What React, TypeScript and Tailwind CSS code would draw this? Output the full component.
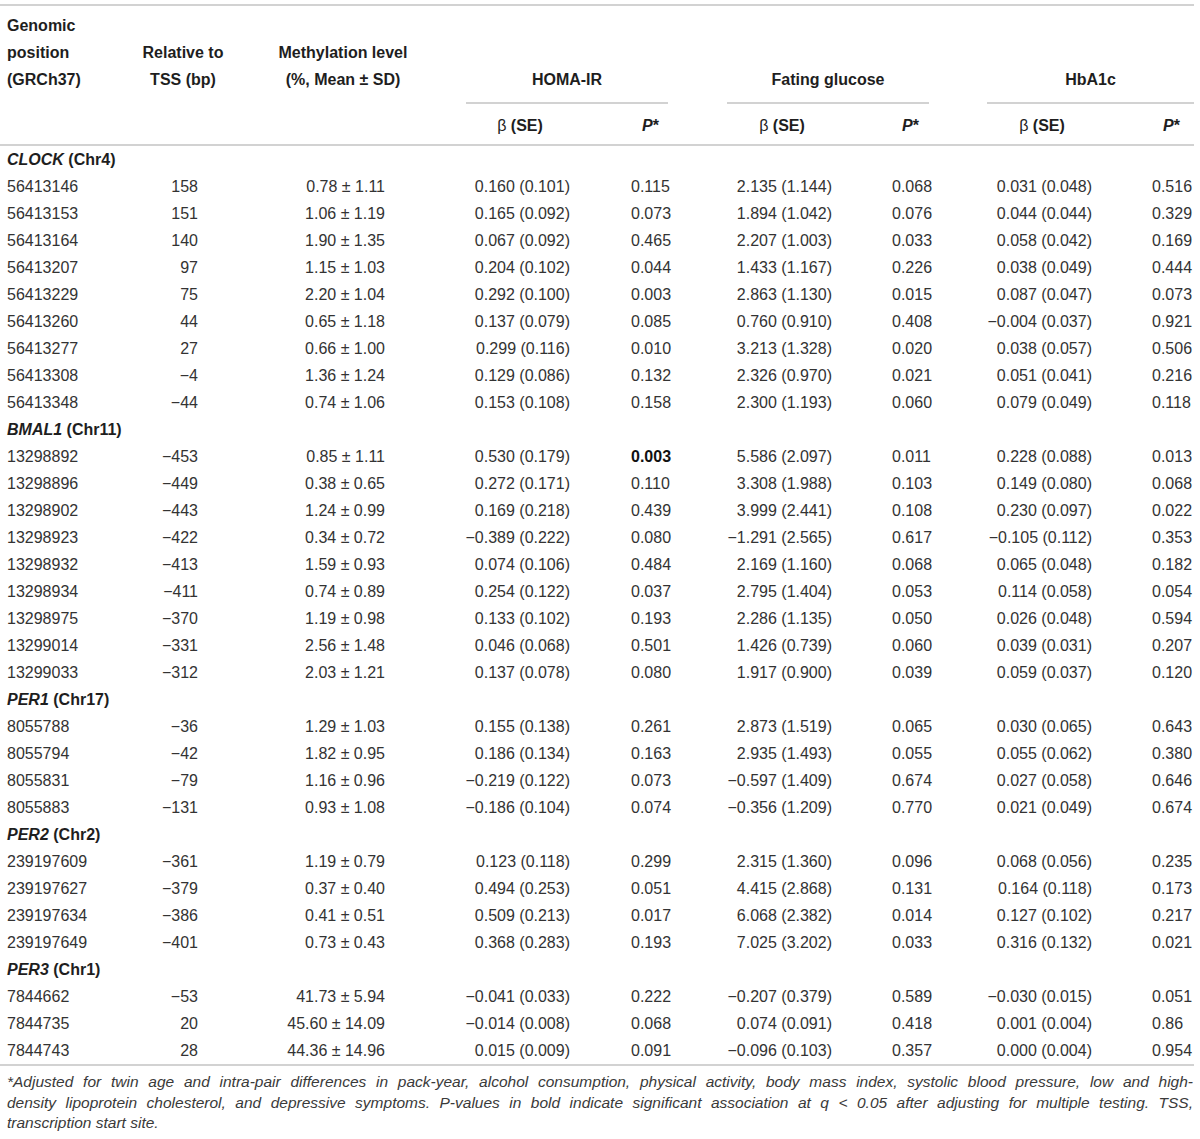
type Row = string[];

// columns: position | TSS | methylation | HOMA β | P | glucose β | P | HbA1c β | P
const grid =
  "grid grid-cols-[130px_106px_214px_140px_122px_140px_120px_140px_82px]";

const body: { gene: string; chr: string; rows: Row[] }[] = [
  {
    gene: "CLOCK",
    chr: "(Chr4)",
    rows: [
      ["56413146", "158", "0.78 ± 1.11", "0.160 (0.101)", "0.115", "2.135 (1.144)", "0.068", "0.031 (0.048)", "0.516"],
      ["56413153", "151", "1.06 ± 1.19", "0.165 (0.092)", "0.073", "1.894 (1.042)", "0.076", "0.044 (0.044)", "0.329"],
      ["56413164", "140", "1.90 ± 1.35", "0.067 (0.092)", "0.465", "2.207 (1.003)", "0.033", "0.058 (0.042)", "0.169"],
      ["56413207", "97", "1.15 ± 1.03", "0.204 (0.102)", "0.044", "1.433 (1.167)", "0.226", "0.038 (0.049)", "0.444"],
      ["56413229", "75", "2.20 ± 1.04", "0.292 (0.100)", "0.003", "2.863 (1.130)", "0.015", "0.087 (0.047)", "0.073"],
      ["56413260", "44", "0.65 ± 1.18", "0.137 (0.079)", "0.085", "0.760 (0.910)", "0.408", "−0.004 (0.037)", "0.921"],
      ["56413277", "27", "0.66 ± 1.00", "0.299 (0.116)", "0.010", "3.213 (1.328)", "0.020", "0.038 (0.057)", "0.506"],
      ["56413308", "−4", "1.36 ± 1.24", "0.129 (0.086)", "0.132", "2.326 (0.970)", "0.021", "0.051 (0.041)", "0.216"],
      ["56413348", "−44", "0.74 ± 1.06", "0.153 (0.108)", "0.158", "2.300 (1.193)", "0.060", "0.079 (0.049)", "0.118"],
    ],
  },
  {
    gene: "BMAL1",
    chr: "(Chr11)",
    rows: [
      ["13298892", "−453", "0.85 ± 1.11", "0.530 (0.179)", "*0.003", "5.586 (2.097)", "0.011", "0.228 (0.088)", "0.013"],
      ["13298896", "−449", "0.38 ± 0.65", "0.272 (0.171)", "0.110", "3.308 (1.988)", "0.103", "0.149 (0.080)", "0.068"],
      ["13298902", "−443", "1.24 ± 0.99", "0.169 (0.218)", "0.439", "3.999 (2.441)", "0.108", "0.230 (0.097)", "0.022"],
      ["13298923", "−422", "0.34 ± 0.72", "−0.389 (0.222)", "0.080", "−1.291 (2.565)", "0.617", "−0.105 (0.112)", "0.353"],
      ["13298932", "−413", "1.59 ± 0.93", "0.074 (0.106)", "0.484", "2.169 (1.160)", "0.068", "0.065 (0.048)", "0.182"],
      ["13298934", "−411", "0.74 ± 0.89", "0.254 (0.122)", "0.037", "2.795 (1.404)", "0.053", "0.114 (0.058)", "0.054"],
      ["13298975", "−370", "1.19 ± 0.98", "0.133 (0.102)", "0.193", "2.286 (1.135)", "0.050", "0.026 (0.048)", "0.594"],
      ["13299014", "−331", "2.56 ± 1.48", "0.046 (0.068)", "0.501", "1.426 (0.739)", "0.060", "0.039 (0.031)", "0.207"],
      ["13299033", "−312", "2.03 ± 1.21", "0.137 (0.078)", "0.080", "1.917 (0.900)", "0.039", "0.059 (0.037)", "0.120"],
    ],
  },
  {
    gene: "PER1",
    chr: "(Chr17)",
    rows: [
      ["8055788", "−36", "1.29 ± 1.03", "0.155 (0.138)", "0.261", "2.873 (1.519)", "0.065", "0.030 (0.065)", "0.643"],
      ["8055794", "−42", "1.82 ± 0.95", "0.186 (0.134)", "0.163", "2.935 (1.493)", "0.055", "0.055 (0.062)", "0.380"],
      ["8055831", "−79", "1.16 ± 0.96", "−0.219 (0.122)", "0.073", "−0.597 (1.409)", "0.674", "0.027 (0.058)", "0.646"],
      ["8055883", "−131", "0.93 ± 1.08", "−0.186 (0.104)", "0.074", "−0.356 (1.209)", "0.770", "0.021 (0.049)", "0.674"],
    ],
  },
  {
    gene: "PER2",
    chr: "(Chr2)",
    rows: [
      ["239197609", "−361", "1.19 ± 0.79", "0.123 (0.118)", "0.299", "2.315 (1.360)", "0.096", "0.068 (0.056)", "0.235"],
      ["239197627", "−379", "0.37 ± 0.40", "0.494 (0.253)", "0.051", "4.415 (2.868)", "0.131", "0.164 (0.118)", "0.173"],
      ["239197634", "−386", "0.41 ± 0.51", "0.509 (0.213)", "0.017", "6.068 (2.382)", "0.014", "0.127 (0.102)", "0.217"],
      ["239197649", "−401", "0.73 ± 0.43", "0.368 (0.283)", "0.193", "7.025 (3.202)", "0.033", "0.316 (0.132)", "0.021"],
    ],
  },
  {
    gene: "PER3",
    chr: "(Chr1)",
    rows: [
      ["7844662", "−53", "41.73 ± 5.94", "−0.041 (0.033)", "0.222", "−0.207 (0.379)", "0.589", "−0.030 (0.015)", "0.051"],
      ["7844735", "20", "45.60 ± 14.09", "−0.014 (0.008)", "0.068", "0.074 (0.091)", "0.418", "0.001 (0.004)", "0.86"],
      ["7844743", "28", "44.36 ± 14.96", "0.015 (0.009)", "0.091", "−0.096 (0.103)", "0.357", "0.000 (0.004)", "0.954"],
    ],
  },
];

// per-column alignment of body cells
const cell = [
  "pl-[7px]",
  "text-right pr-[38px]",
  "text-right pr-[65px]",
  "text-right pr-[20px]",
  "pl-[41px]",
  "text-right pr-[20px]",
  "pl-[40px]",
  "text-right pr-[20px]",
  "pl-[40px]",
];

function PStar() {
  return (
    <span className="font-bold">
      <span className="italic">P</span>*
    </span>
  );
}

function Beta() {
  return (
    <>
      <span className="font-normal">β</span> <span className="font-bold">(SE)</span>
    </>
  );
}

export default function App() {
  return (
    <div className="w-[1200px] bg-white pt-[4px] font-['Liberation_Sans',Arial,sans-serif] text-[16px] text-[#333]">
      <div className="w-[1194px]">
        {/* Header, first line */}
        <div className={`${grid} h-[100px] border-t-2 border-[#d2d2d2] font-bold leading-[27px] text-[#1e1e1e]`}>
          <div className="flex flex-col justify-end pb-[11px] pl-[7px]">
            <div>
              Genomic
              <br />
              position
              <br />
              (GRCh37)
            </div>
          </div>
          <div className="flex flex-col justify-end pb-[11px] text-center">
            <div>
              Relative to
              <br />
              TSS (bp)
            </div>
          </div>
          <div className="flex flex-col justify-end pb-[11px] text-center">
            <div>
              Methylation level
              <br />
              (%, Mean ± SD)
            </div>
          </div>
          <div className="col-span-2 flex flex-col justify-end">
            <div className="ml-[16px] mr-[44px] border-b-2 border-[#d2d2d2] pb-[9px] text-center">HOMA-IR</div>
          </div>
          <div className="col-span-2 flex flex-col justify-end">
            <div className="ml-[15px] mr-[43px] border-b-2 border-[#d2d2d2] pb-[9px] text-center">Fating glucose</div>
          </div>
          <div className="col-span-2 flex flex-col justify-end">
            <div className="ml-[15px] border-b-2 border-[#d2d2d2] pb-[9px] text-center">HbA1c</div>
          </div>
        </div>

        {/* Header, second line */}
        <div className={`${grid} h-[42px] border-b-2 border-[#d2d2d2] pt-[8px] leading-[27px] text-[#1e1e1e]`}>
          <div />
          <div />
          <div />
          <div className="text-center">
            <Beta />
          </div>
          <div className="pl-[52px]">
            <PStar />
          </div>
          <div className="text-center">
            <Beta />
          </div>
          <div className="pl-[50px]">
            <PStar />
          </div>
          <div className="text-center">
            <Beta />
          </div>
          <div className="pl-[51px]">
            <PStar />
          </div>
        </div>

        {/* Body */}
        <div className="border-b-2 border-[#d2d2d2]">
          {body.map((g) => (
            <div key={g.gene}>
              <div className="h-[27px] pl-[7px] font-bold leading-[27px] text-[#1e1e1e]">
                <span className="italic">{g.gene}</span> {g.chr}
              </div>
              {g.rows.map((r) => (
                <div key={r[0]} className={`${grid} h-[27px] leading-[27px]`}>
                  {r.map((v, i) => (
                    <div key={i} className={`whitespace-nowrap ${cell[i]}`}>
                      {v.startsWith("*") ? <span className="font-bold text-[#111]">{v.slice(1)}</span> : v}
                    </div>
                  ))}
                </div>
              ))}
            </div>
          ))}
        </div>

        {/* Footnote */}
        <div className="pl-[7px] pr-[1px] pt-[6px] text-[15.5px] italic leading-[20.5px] text-[#3a3a3a]">
          <div className="text-justify [text-align-last:justify]">
            *Adjusted for twin age and intra-pair differences in pack-year, alcohol consumption, physical activity, body
            mass index, systolic blood pressure, low and high-
          </div>
          <div className="text-justify [text-align-last:justify]">
            density lipoprotein cholesterol, and depressive symptoms. P-values in bold indicate significant association at
            q &lt; 0.05 after adjusting for multiple testing. TSS,
          </div>
          <div>transcription start site.</div>
        </div>
      </div>
    </div>
  );
}
